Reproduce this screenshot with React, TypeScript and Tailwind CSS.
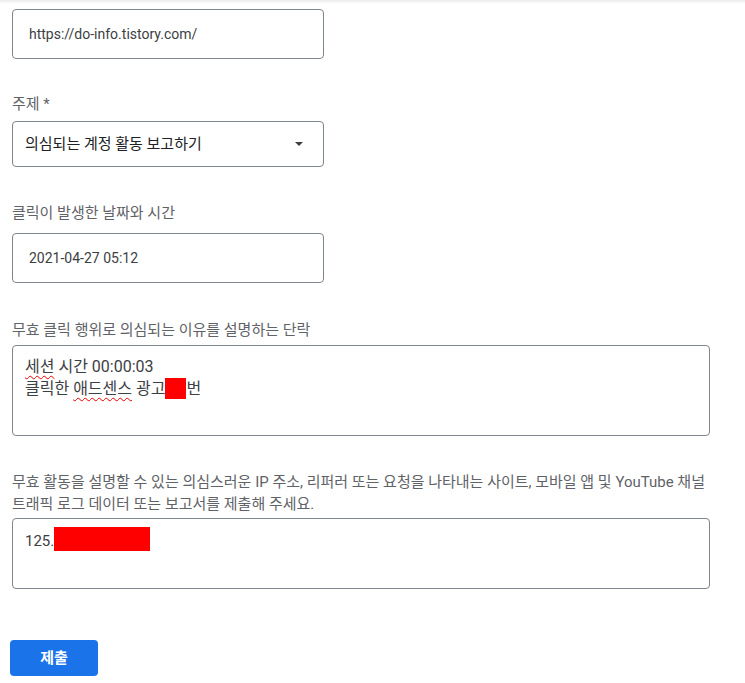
import React from "react";

const font = { fontFamily: 'Roboto, "Noto Sans CJK KR", sans-serif' };

export default function App() {
  return (
    <div className="min-h-[683px] w-[745px] bg-white relative" style={font}>
      <div className="h-[4px] bg-gradient-to-b from-[#ececec] to-white" />
      <div className="pl-[12px] pt-[5px]">
        <div className="w-[312px] h-[50px] border border-[#80868b] rounded-[4px] flex items-center pl-[16px] text-[14px] text-[#3c4043]">
          https://do-info.tistory.com/
        </div>

        <div className="mt-[35px] h-[20px] leading-[20px] text-[15px] text-[#5f6368]">주제 *</div>
        <div className="mt-[7px] w-[312px] h-[46px] border border-[#80868b] rounded-[4px] flex items-center justify-between pl-[12px] pr-[20px] text-[15px] text-[#202124]">
          <span>의심되는 계정 활동 보고하기</span>
          <svg width="8" height="4" viewBox="0 0 8 4"><path d="M0 0h8L4 4z" fill="#3c4043" /></svg>
        </div>

        <div className="mt-[36px] h-[20px] leading-[20px] text-[15px] text-[#5f6368]">클릭이 발생한 날짜와 시간</div>
        <div className="mt-[10px] w-[312px] h-[50px] border border-[#80868b] rounded-[4px] flex items-center pl-[16px] text-[14px] text-[#3c4043]">
          2021-04-27 05:12
        </div>

        <div className="mt-[37px] h-[20px] leading-[20px] text-[15px] text-[#5f6368]">무효 클릭 행위로 의심되는 이유를 설명하는 단락</div>
        <div className="mt-[5px] w-[698px] h-[91px] border border-[#80868b] rounded-[4px] pl-[12px] pt-[10px] text-[16px] leading-[22px] text-[#3c4043]">
          <div>
            <span className="underline decoration-wavy decoration-[#e00] decoration-1 underline-offset-[3px]">세션</span> 시간 00:00:03
          </div>
          <div>
            클릭한{" "}
            <span className="underline decoration-wavy decoration-[#e00] decoration-1 underline-offset-[3px]">애드센스</span>{" "}
            광고<span className="inline-block w-[21px] h-[21px] bg-[#ff0000] align-[-5px]" />번
          </div>
        </div>

        <div className="mt-[35px] w-[700px] text-[15px] leading-[22px] text-[#5f6368]">
          무효 활동을 설명할 수 있는 의심스러운 IP 주소, 리퍼러 또는 요청을 나타내는 사이트, 모바일 앱 및 YouTube 채널 트래픽 로그 데이터 또는 보고서를 제출해 주세요.
        </div>
        <div className="mt-[3px] w-[698px] h-[71px] border border-[#80868b] rounded-[4px] pl-[12px] pt-[8px] text-[15px] leading-[24px] text-[#3c4043] flex items-start">
          <span className="mt-[2px]">125.</span>
          <span className="inline-block w-[96px] h-[24px] bg-[#ff0000]" />
        </div>

        <button className="mt-[51px] -ml-[2px] w-[88px] h-[36px] rounded-[4px] bg-[#1a73e8] text-white text-[15px] font-bold">
          제출
        </button>
      </div>
    </div>
  );
}
